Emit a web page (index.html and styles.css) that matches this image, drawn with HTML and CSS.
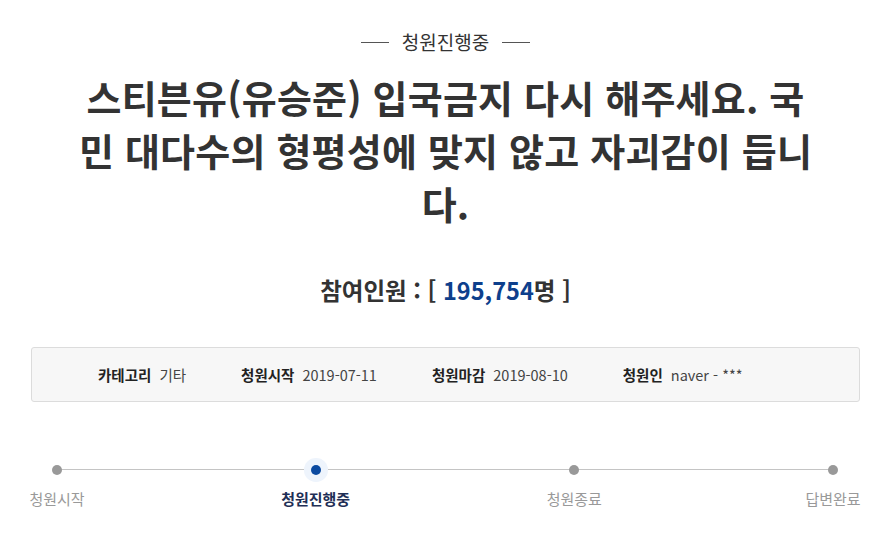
FILE: index.html
```html
<!DOCTYPE html>
<html lang="ko">
<head>
<meta charset="utf-8">
<title>청원진행중</title>
<link rel="stylesheet" href="styles.css">
</head>
<body>
<main class="page">
  <div class="status"><span class="status-text">청원진행중</span></div>
  <h1 class="title">스티븐유(유승준) 입국금지 다시 해주세요. 국민 대다수의 형평성에 맞지 않고 자괴감이 듭니다.</h1>
  <p class="count">참여인원 : [ <span class="count-num">195,754</span>명 ]</p>
  <ul class="info">
    <li class="info-item"><strong class="info-label">카테고리</strong><span class="info-value">기타</span></li>
    <li class="info-item"><strong class="info-label">청원시작</strong><span class="info-value">2019-07-11</span></li>
    <li class="info-item"><strong class="info-label">청원마감</strong><span class="info-value">2019-08-10</span></li>
    <li class="info-item"><strong class="info-label">청원인</strong><span class="info-value">naver - ***</span></li>
  </ul>
  <div class="progress">
    <div class="track">
      <div class="step"><span class="dot"></span><span class="step-label">청원시작</span></div>
      <div class="step active"><span class="dot"></span><span class="step-label">청원진행중</span></div>
      <div class="step"><span class="dot"></span><span class="step-label">청원종료</span></div>
      <div class="step"><span class="dot"></span><span class="step-label">답변완료</span></div>
    </div>
  </div>
</main>
</body>
</html>
```

FILE: styles.css
```css
* { box-sizing: border-box; }
html, body {
  margin: 0;
  padding: 0;
  background: #fff;
}
body {
  font-family: "Noto Sans CJK KR", "Noto Sans", sans-serif;
  color: #333;
}
.page {
  padding: 30px 29px 0 31px;
}
.status {
  display: flex;
  justify-content: center;
  height: 24px;
  line-height: 24px;
}
.status-text {
  display: flex;
  align-items: center;
  gap: 13px;
  font-size: 19px;
  color: #333;
}
.status-text::before,
.status-text::after {
  content: "";
  width: 28px;
  height: 1px;
  background: #555;
}
.title {
  max-width: 740px;
  margin: 16px auto 0;
  font-size: 38px;
  line-height: 53px;
  font-weight: 700;
  text-align: center;
  color: #333;
  letter-spacing: 0.2px;
}
.count {
  margin: 46px 0 0;
  text-align: center;
  font-size: 23.5px;
  line-height: 30px;
  font-weight: 700;
  color: #333;
}
.count-num {
  color: #0e3f8c;
}
.info {
  list-style: none;
  margin: 42px 0 0;
  padding: 0 0 0 66px;
  height: 55px;
  display: flex;
  align-items: center;
  gap: 55px;
  background: #f7f7f7;
  border: 1px solid #dcdcdc;
  border-radius: 3px;
  font-size: 14.5px;
}
.info-item {
  display: flex;
  gap: 8px;
  align-items: baseline;
}
.info-label {
  font-weight: 700;
  color: #222;
}
.info-value {
  color: #444;
}
.progress {
  margin-top: 57px;
  padding: 0 27px 0 26px;
}
.track {
  position: relative;
  display: flex;
  justify-content: space-between;
}
.track::before {
  content: "";
  position: absolute;
  left: 0;
  right: 0;
  top: 10px;
  height: 1px;
  background: #c4c4c4;
}
.step {
  width: 0;
  display: flex;
  flex-direction: column;
  align-items: center;
  position: relative;
}
.dot {
  width: 10px;
  height: 10px;
  margin-top: 6px;
  border-radius: 50%;
  background: #999;
}
.active .dot {
  background: #0b4aa0;
  box-shadow: 0 0 0 7px #eef4fc;
}
.step-label {
  margin-top: 14px;
  white-space: nowrap;
  font-size: 15px;
  line-height: 20px;
  color: #999;
}
.active .step-label {
  font-weight: 700;
  color: #1f2f56;
}
```
